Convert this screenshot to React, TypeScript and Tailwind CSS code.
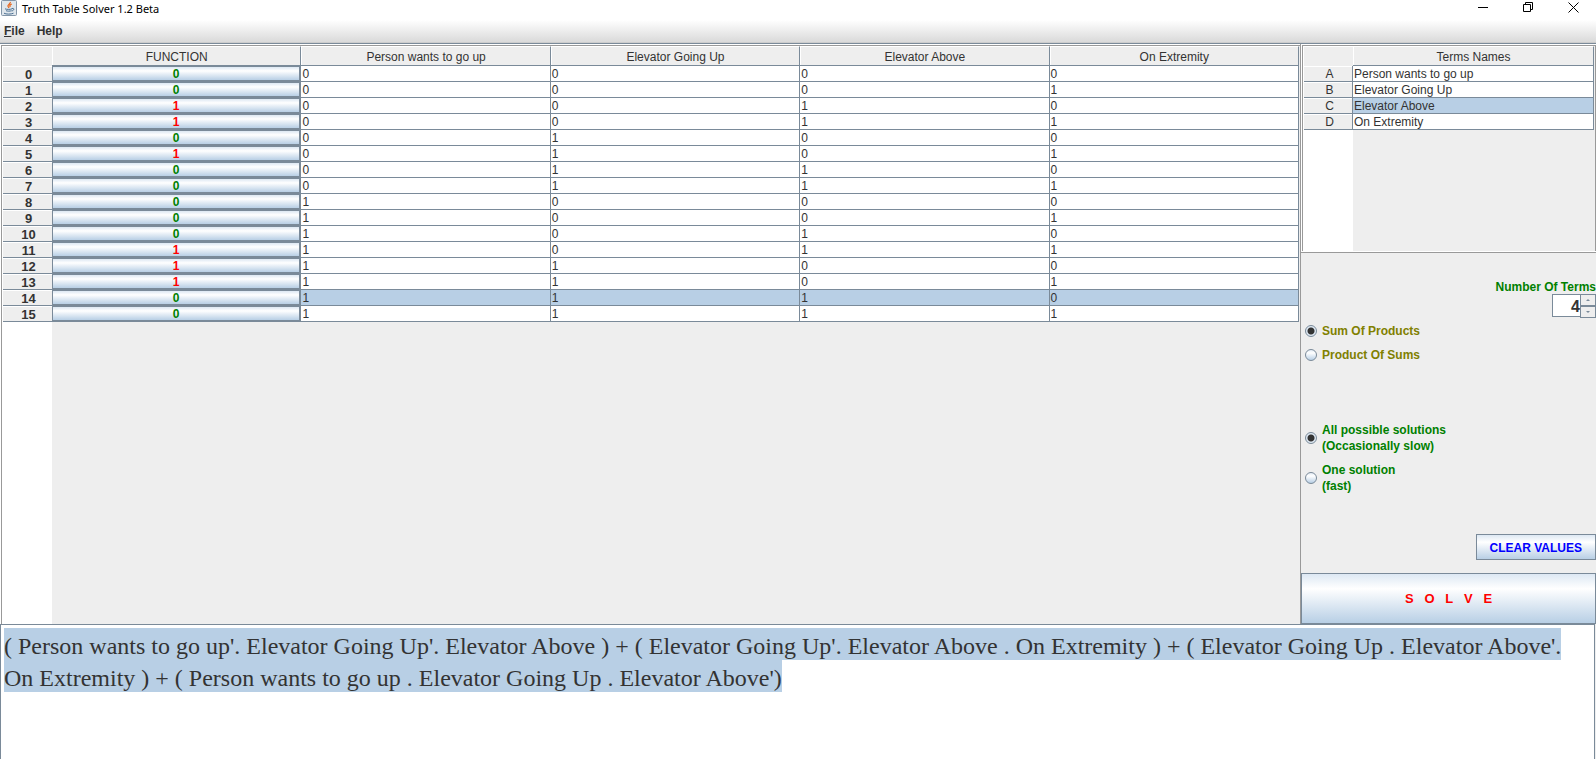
import { useState } from "react";

const terms = ["Person wants to go up", "Elevator Going Up", "Elevator Above", "On Extremity"];
const results = [0, 0, 1, 1, 0, 1, 0, 0, 0, 0, 0, 1, 1, 1, 0, 0];

function JavaIcon() {
  return (
    <svg width="16" height="16" viewBox="0 0 16 16" fill="none" aria-hidden="true">
      <rect x="0.5" y="0.5" width="15" height="15" rx="1" fill="#dfe6ec" stroke="#8295a8" />
      <path d="M9.300 2c.6 1.800-3 2.500-2.300 4.300l1 1.500M10.800 4c-2 1-2.500 1.500-1.500 3" stroke="#e8661c" strokeWidth="1.300" />
      <path d="M4 8.800c1.500.8 5.500.8 7 0M5 10.700c1.500.6 4 .6 5.500 0M3 13.200c2 1.200 7 1.200 9.500 0M11 8.500c2.500-.8 2.500 2-.3 2.500" stroke="#4a6f92" />
    </svg>
  );
}

function TitleBar() {
  return (
    <header className="flex h-5 items-start bg-white font-['Noto_Sans','Open_Sans',sans-serif] text-[11px] leading-[17px] text-black">
      <div className="flex flex-1 items-start gap-[5px] pl-px">
        <JavaIcon />
        <h1>Truth Table Solver 1.2 Beta</h1>
      </div>
      <button aria-label="Minimize" className="flex h-[15px] w-[45px] items-center justify-center">
        <svg width="11" height="11" viewBox="0 0 11 11" stroke="black"><path d="M0 5.500h10" /></svg>
      </button>
      <button aria-label="Restore" className="flex h-[15px] w-[45px] items-center justify-center">
        <svg width="11" height="11" viewBox="0 0 11 11" fill="none" stroke="black"><path d="M.5 2.500h7v7h-7zM2.500 2.500v-2h7v7h-2" /></svg>
      </button>
      <button aria-label="Close" className="flex h-[15px] w-[45px] items-center justify-center">
        <svg width="11" height="11" viewBox="0 0 11 11" fill="none" stroke="black"><path d="M.5.5l10 10M10.500.5l-10 10" /></svg>
      </button>
    </header>
  );
}

function TruthTable() {
  const [values, setValues] = useState(results);
  return (
    <table className="w-full table-fixed border-separate border-spacing-0 text-[12px] leading-[14px]">
      <colgroup>
        <col className="w-[49px]" />
        <col />
        <col />
        <col />
        <col />
        <col />
      </colgroup>
      <thead>
        <tr className="h-5">
          <td className="border-t border-white bg-[#eee]" />
          {["FUNCTION", ...terms].map((name) => (
            <th key={name} scope="col" className="border-t border-r border-b border-t-white border-r-[#7a8a99] border-b-[#7a8a99] bg-[#eee] p-0 pt-px pl-px font-normal shadow-[inset_1px_0_0_white]">
              {name}
            </th>
          ))}
        </tr>
      </thead>
      <tbody>
        {values.map((value, row) => (
          <tr key={row} className="h-4">
            <th scope="row" className="h-4 border-b border-[#7a8a99] bg-[#eee] p-0 pt-[2px] pl-[2px] text-[13px] leading-[13px] font-bold shadow-[inset_0_1px_0_white]">
              {row}
            </th>
            <td className="h-4 p-0">
              <button
                onClick={() => setValues(values.map((v, i) => (i === row ? 1 - v : v)))}
                className={`block h-4 w-full border border-r-2 border-b-2 border-[#7a8a99] bg-linear-to-b from-[#dde8f3] via-white via-30% to-[#b8cfe5] pt-px text-center font-bold leading-3 ${value ? "text-[#f00]" : "text-[#008000]"}`}
              >
                {value}
              </button>
            </td>
            {terms.map((name, col) => (
              <td key={name} className={`h-4 border-r border-b border-[#7a8a99] p-0 pt-px pl-px ${row === 14 ? "bg-[#b8cfe5]" : "bg-white"}`}>
                {(row >> (3 - col)) & 1}
              </td>
            ))}
          </tr>
        ))}
      </tbody>
    </table>
  );
}

function TermsTable() {
  return (
    <table className="w-full table-fixed border-separate border-spacing-0 text-[12px] leading-[14px]">
      <colgroup>
        <col className="w-[49px]" />
        <col />
      </colgroup>
      <thead>
        <tr className="h-5">
          <td className="border-t border-white bg-[#eee]" />
          <th scope="col" className="border-t border-r border-b border-t-white border-r-[#7a8a99] border-b-[#7a8a99] bg-[#eee] p-0 pt-px pl-px font-normal shadow-[inset_1px_0_0_white]">
            Terms Names
          </th>
        </tr>
      </thead>
      <tbody>
        {terms.map((name, i) => (
          <tr key={name} className="h-4">
            <th scope="row" className="h-4 border-r border-b border-[#7a8a99] bg-[#eee] p-0 pt-px pl-[3px] font-normal shadow-[inset_0_1px_0_white]">
              {"ABCD"[i]}
            </th>
            <td className={`h-4 border-r border-b border-[#7a8a99] p-0 pt-px pl-px ${i === 2 ? "bg-[#b8cfe5]" : "bg-white"}`}>{name}</td>
          </tr>
        ))}
      </tbody>
    </table>
  );
}

type ChoiceProps = { group: string; lines: string[]; color: string; checked?: boolean };

function Choice({ group, lines, color, checked }: ChoiceProps) {
  return (
    <label className={`flex items-center gap-[5px] text-[12px] leading-4 font-bold ${color}`}>
      <input
        type="radio"
        name={group}
        defaultChecked={checked}
        className="size-3 shrink-0 appearance-none rounded-full border border-[#7a8a99] bg-linear-to-b from-[#e4edf6] via-white via-30% to-[#b8cfe5] checked:bg-[radial-gradient(circle,#333_3px,#dfe9f3_4px)]"
      />
      <span>
        {lines.map((line) => (
          <span key={line} className="block">{line}</span>
        ))}
      </span>
    </label>
  );
}

function Spinner() {
  const [count, setCount] = useState(4);
  return (
    <div className="flex flex-col items-end">
      <label htmlFor="count" className="text-[12px] leading-[14px] font-bold text-[#008000]">Number Of Terms</label>
      <div className="flex h-6">
        <input
          id="count"
          value={count}
          onChange={(e) => setCount(Number(e.target.value) || 0)}
          className="h-[23px] w-[28px] border border-r-0 border-[#7a8a99] bg-white pt-[2px] text-right text-[16px] font-bold outline-none"
        />
        <div className="flex w-4 flex-col">
          <button aria-label="More terms" onClick={() => setCount(count + 1)} className="flex h-3 items-center justify-center border border-[#7a8a99]">
            <svg width="4" height="2" viewBox="0 0 4 2" fill="#7a8a99"><path d="M0 2h4L2 0z" /></svg>
          </button>
          <button aria-label="Fewer terms" onClick={() => setCount(count - 1)} className="flex h-3 items-center justify-center border border-[#7a8a99]">
            <svg width="4" height="2" viewBox="0 0 4 2" fill="#7a8a99"><path d="M0 0h4L2 2z" /></svg>
          </button>
        </div>
      </div>
    </div>
  );
}

export default function App() {
  return (
    <div className="flex min-h-screen flex-col bg-[#eee] font-['Liberation_Sans',Arial,sans-serif] text-[#333]">
      <TitleBar />
      <nav className="flex h-[23px] items-center gap-3 border-b border-[#ccc] bg-linear-to-b from-white to-[#dadada] pl-1 text-[12px] font-bold">
        <button><span className="underline">F</span>ile</button>
        <button>Help</button>
      </nav>
      <main className="flex h-[581px] border-t border-[#7a8a99] bg-[#eee]">
        <section className="flex min-w-0 flex-1 flex-col border-r border-[#999] bg-white pt-px pl-px">
          <div className="flex flex-1 flex-col border-t border-l border-[#999] bg-[linear-gradient(to_right,white_50px,#eee_50px)] pr-px pl-px">
            <TruthTable />
          </div>
        </section>
        <aside className="flex w-[295px] flex-col">
          <div className="h-[209px] border-b border-[#999] bg-white pt-px pl-px">
            <div className="h-[206px] border-t border-r border-l border-[#999] bg-[linear-gradient(to_right,white_50px,#eee_50px)] pr-px pl-px">
              <TermsTable />
            </div>
          </div>
          <div className="flex flex-1 flex-col pt-[27px]">
            <Spinner />
            <div className="flex flex-col gap-2 pt-[5px] pl-1">
              <Choice group="form" lines={["Sum Of Products"]} color="text-[#808000]" checked />
              <Choice group="form" lines={["Product Of Sums"]} color="text-[#808000]" />
            </div>
            <div className="flex flex-col gap-2 pt-[59px] pl-1">
              <Choice group="mode" lines={["All possible solutions", "(Occasionally slow)"]} color="text-[#008000]" checked />
              <Choice group="mode" lines={["One solution", "(fast)"]} color="text-[#008000]" />
            </div>
            <div className="mt-auto flex flex-col items-end gap-[13px]">
              <button className="h-[26px] border border-[#7a8a99] bg-linear-to-b from-[#dde8f3] via-white via-30% to-[#b8cfe5] px-[13px] pt-px text-[12px] font-bold text-[#00f]">
                CLEAR VALUES
              </button>
              <button className="h-[51px] w-full border border-[#7a8a99] bg-linear-to-b from-[#dde8f3] via-white via-30% to-[#b8cfe5] text-[13px] font-bold whitespace-pre text-[#f00]">
                {"S   O   L   V   E"}
              </button>
            </div>
          </div>
        </aside>
      </main>
      <section className="mr-px flex-1 border-t border-r border-l border-[#7a8a99] bg-white px-[3px] pt-[5px]">
        <p className="font-['Liberation_Serif','Times_New_Roman',serif] text-[24px] leading-8">
          <span className="bg-[#b8cfe5] box-decoration-clone pt-[5px] pb-px">
            ( Person wants to go up'. Elevator Going Up'. Elevator Above ) + ( Elevator Going Up'. Elevator Above . On Extremity ) + ( Elevator Going Up . Elevator Above'. On Extremity ) + ( Person wants to go up . Elevator Going Up . Elevator Above')
          </span>
        </p>
      </section>
    </div>
  );
}
